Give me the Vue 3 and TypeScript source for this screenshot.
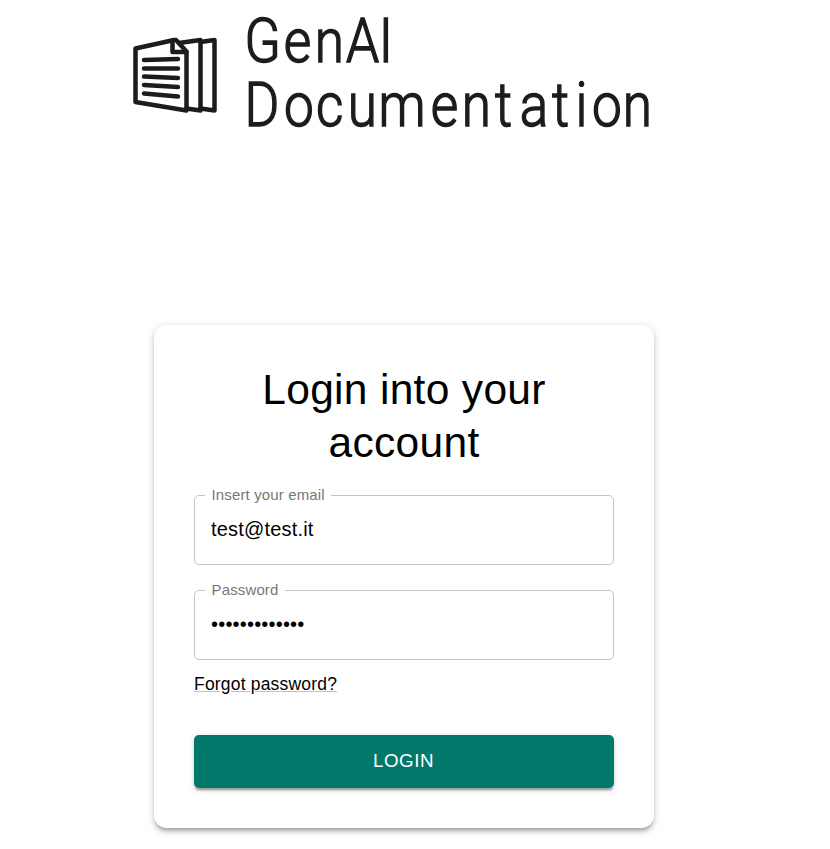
<script setup lang="ts">
import { ref } from 'vue'

interface LogoLine {
  text: string
  y: number
  left: number[]
}

const email = ref('test@test.it')
const password = ref('testpassword1')

// Horizontal condensing applied to the wordmark; glyph origins are in logo pixels.
const condense = 0.87
const lines: LogoLine[] = [
  { text: 'GenAI', y: 49.2, left: [113.5, 152.7, 183.8, 215, 247.7] },
  { text: 'Documentation', y: 113.2, left: [113.4, 153, 185, 216.7, 247.5, 299.7, 330.7, 364, 388.7, 421, 444.5, 461, 491.8] },
]
const origins = (line: LogoLine): string => line.left.map((x) => (x / condense).toFixed(2)).join(' ')
</script>

<template>
  <main class="page">
    <svg class="logo" width="524" height="124" viewBox="0 0 524 124" role="img" aria-label="GenAI Documentation">
      <g class="sheets">
        <path d="M43 27 4.5 35.5V89L55.5 97.5V38.5L45 27Z" />
        <path class="fold" d="M41.5 27.5V39H55.5" />
        <path d="M48 30 69.5 27V97.5L55.5 95.5" />
        <path d="M69.5 29 83.5 27V97.5L69.5 95.5" />
        <path d="M13 47 47 46M13 55.5H47M13 63.5 47 65M13 72 47 74M13 80.5 47 83.5" />
      </g>
      <g class="wordmark" :transform="`scale(${condense} 1)`">
        <text v-for="line in lines" :key="line.text" :x="origins(line)" :y="line.y">{{ line.text }}</text>
      </g>
    </svg>

    <form class="card" @submit.prevent>
      <h1 class="title">Login into your account</h1>
      <fieldset class="field">
        <legend><label for="email">Insert your email</label></legend>
        <input id="email" v-model="email" type="email" />
      </fieldset>
      <fieldset class="field">
        <legend><label for="password">Password</label></legend>
        <input id="password" v-model="password" type="password" />
      </fieldset>
      <a class="forgot" href="#">Forgot password?</a>
      <button class="submit" type="submit">LOGIN</button>
    </form>
  </main>
</template>

<style>
body {
  margin: 0;
  background: #fff;
}
</style>

<style scoped>
.page {
  box-sizing: border-box;
  height: 849px;
  width: 808px;
  padding-top: 13px;
  display: flex;
  flex-direction: column;
  align-items: center;
  font-family: 'Liberation Sans', Arial, sans-serif;
  color: #000;
}
.logo {
  display: block;
  flex: none;
  margin-right: 22px;
  overflow: visible;
}
.sheets {
  fill: none;
  stroke: #1c1c1c;
  stroke-width: 4.5;
  stroke-linejoin: round;
  stroke-linecap: round;
}
.wordmark {
  font: 300 61px Roboto, sans-serif;
  fill: #1c1c1c;
  stroke: #1c1c1c;
  stroke-width: 1.5;
}
.card {
  box-sizing: border-box;
  flex: none;
  width: 500px;
  height: 503.5px;
  margin-top: 187.5px;
  padding: 39.5px 40px 40px;
  display: flex;
  flex-direction: column;
  border-radius: 12.5px;
  background: #fff;
  box-shadow: 0 3.75px 3.75px -2.5px rgba(0, 0, 0, 0.2), 0 3.75px 5px rgba(0, 0, 0, 0.14),
    0 1.25px 10px rgba(0, 0, 0, 0.12);
}
.title {
  margin: 0 0 19px;
  padding: 0 50px;
  text-align: center;
  font-size: 42.5px;
  font-weight: 400;
  line-height: 52.5px;
  letter-spacing: 0.00735em;
}
.field {
  box-sizing: border-box;
  width: 420px;
  height: 77px;
  margin: 0 0 18px;
  padding: 0 16px;
  border: 1px solid #c4c4c4;
  border-radius: 5px;
}
.field legend {
  height: 15px;
  margin-left: -6px;
  padding: 0 6px 0 6.5px;
  font-size: 15px;
  line-height: 13px;
  letter-spacing: 0.00938em;
  color: #777;
}
.field input {
  display: block;
  box-sizing: border-box;
  width: 100%;
  height: 29px;
  margin-top: 12px;
  padding: 0;
  border: 0;
  outline: 0;
  background: none;
  font: 20px 'Liberation Sans', Arial, sans-serif;
  letter-spacing: 0.00938em;
  color: #000;
}
.forgot {
  align-self: flex-start;
  margin-top: -6px;
  font-size: 17.5px;
  line-height: 25px;
  letter-spacing: 0.01071em;
  color: #000;
  text-decoration: underline;
  text-decoration-color: rgba(25, 118, 210, 0.4);
}
.submit {
  height: 53px;
  margin-top: auto;
  padding: 0 1px 2px 0;
  border: 0;
  border-radius: 5px;
  background: #00796b;
  color: #fff;
  font: 18.75px 'Liberation Sans', Arial, sans-serif;
  letter-spacing: 0.02857em;
  box-shadow: 0 3.75px 1.25px -2.5px rgba(0, 0, 0, 0.2), 0 2.5px 2.5px rgba(0, 0, 0, 0.14),
    0 1.25px 6.25px rgba(0, 0, 0, 0.12);
}
</style>
